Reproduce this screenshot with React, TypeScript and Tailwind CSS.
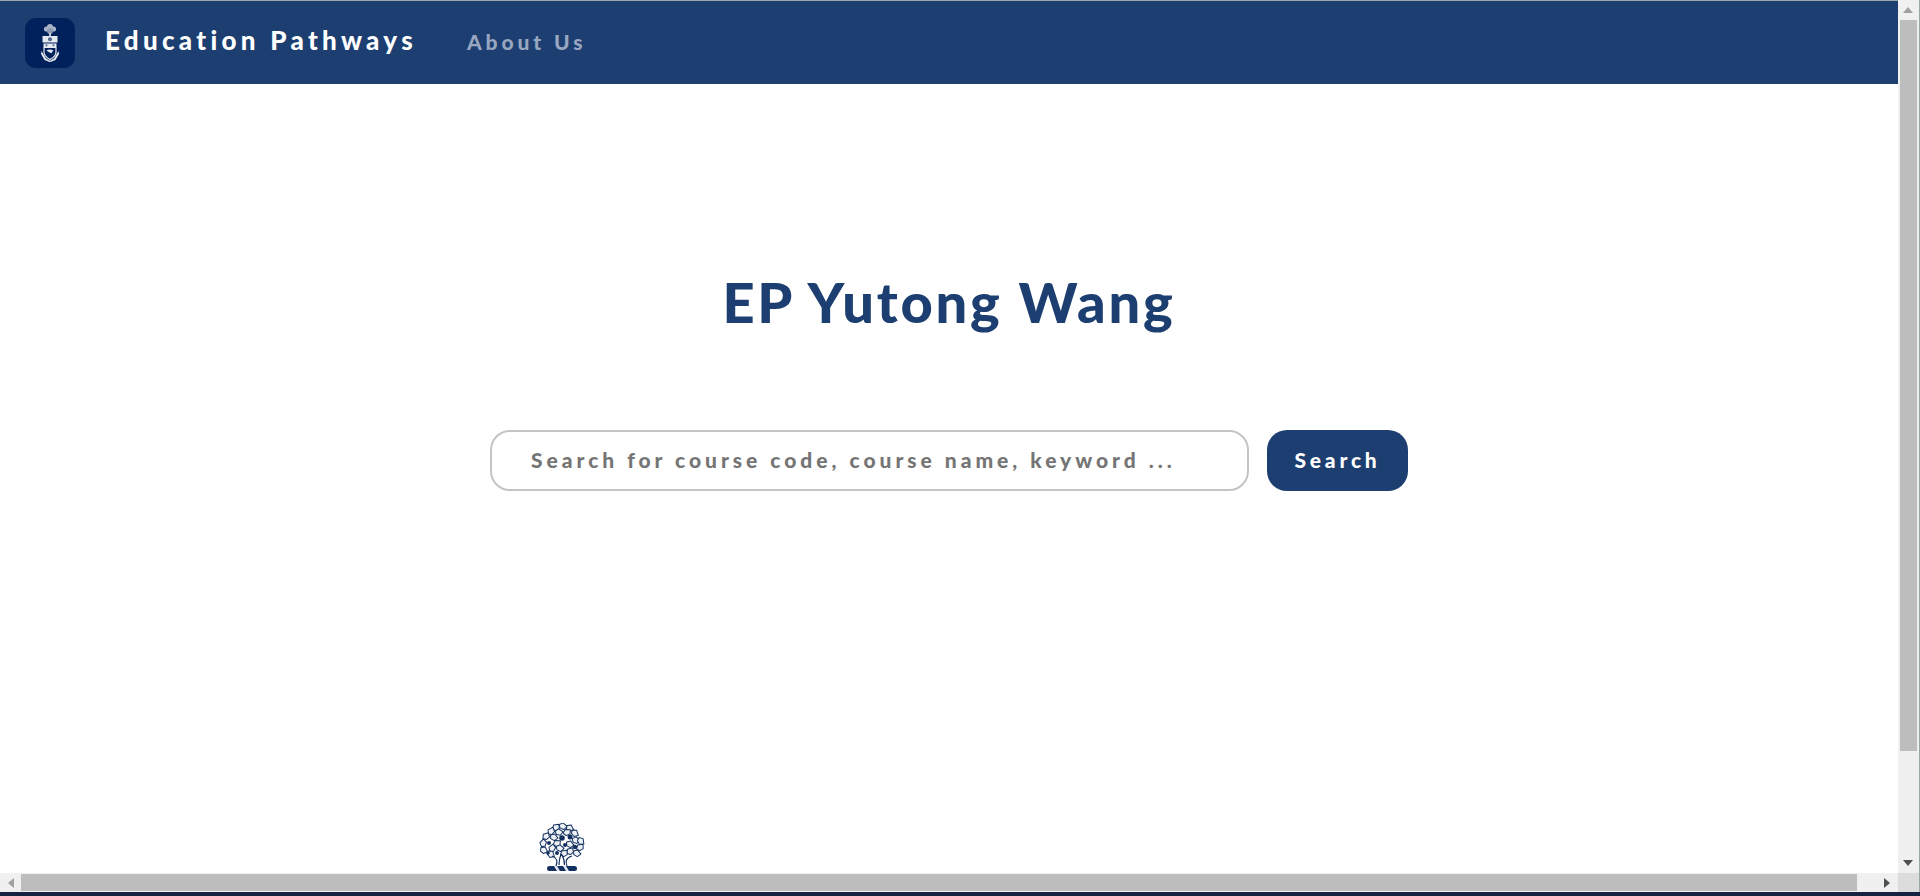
function Crest() {
  return (
    <svg viewBox="0 0 50 50" className="h-[50px] w-[50px]">
      <rect width="50" height="50" rx="11" fill="#00215c" />
      <g fill="#e4e8ef">
        <circle cx="25" cy="9" r="3" fill="#a9b4c8" />
        <circle cx="21.500" cy="11" r="2.600" fill="#a9b4c8" />
        <circle cx="28.500" cy="11" r="2.600" fill="#a9b4c8" />
        <circle cx="25" cy="13" r="3" fill="#8c9ab4" />
        <rect x="24.200" y="15" width="1.600" height="3.500" />
        <path d="M17.500 18h15v6.500h-15z" />
        <circle cx="25" cy="21.200" r="2" fill="#4f648c" />
        <path d="M18.500 25.500h13v3.500h-13z" />
        <circle cx="21.500" cy="27.200" r="1" fill="#4f648c" />
        <circle cx="28.500" cy="27.200" r="1" fill="#4f648c" />
        <path d="M19 29.500h12v4.500c0 3.500-3 6-6 7.500-3-1.500-6-4-6-7.500z" fill="none" stroke="#e4e8ef" strokeWidth="1.200" />
        <path d="M21.500 32.500c2-1.400 5-1.200 7 .3-1 .5-1.600 1-2 2.700-1.300-1-3-1.600-5-3z" />
        <path d="M16.500 33l-.5 3 3.500 6 5 2 1-1-4.500-2.500-3-5z" />
        <path d="M33.500 33l.5 3-3.500 6-5 2-1-1 4.500-2.500 3-5z" />
      </g>
    </svg>
  );
}

function Tree() {
  const leaves = [
    [24, 3, 20], [17, 4, -30], [31, 5, 40], [12, 8, -50], [20, 9, 10], [28, 9, -20], [36, 10, 50],
    [7, 13, -40], [15, 14, 30], [37, 17, 20], [42, 18, 60], [4, 20, -70], [18, 20, -20],
    [31, 21, 30], [41, 24, -30], [5, 27, 40], [13, 25, -60], [21, 25, 20], [31, 28, -40], [38, 30, 30],
    [12, 31, 50], [25, 30, -30],
  ];
  const patches = [
    [23, 15, 2.800], [31, 14, 2.500], [10, 20, 2], [26, 22, 2], [36, 24, 2.200], [9, 30, 1.800], [18, 30, 2],
  ];
  return (
    <svg viewBox="0 0 46 49" className="h-[49px] w-[46px]">
      {leaves.map(([x, y, a], i) => (
        <path
          key={i}
          d={`M${x - 4} ${y}L${x - 1} ${y - 3}L${x + 4} ${y - 1}L${x + 2} ${y + 3}L${x - 2} ${y + 3}z`}
          transform={`rotate(${a} ${x} ${y})`}
          fill="#eef1f6"
          stroke="#12305f"
          strokeWidth="1"
          strokeLinejoin="round"
        />
      ))}
      {patches.map(([x, y, r], i) => (
        <circle key={i} cx={x} cy={y} r={r} fill="#12305f" />
      ))}
      <path
        d="M17 43c2-5 1-8-4-10M28 43c-2-5-1-8 5-10M20 42c0-4 .5-7 2-11M25.500 42c0-4-.5-7-3-11"
        fill="none"
        stroke="#12305f"
        strokeWidth="1.200"
      />
      <rect x="8" y="43" width="30" height="5" rx="2.500" fill="#12305f" />
      <path d="M15 43l3 5h3l-3-5zM24 43l3 5h3l-3-5z" fill="#dfe5ee" />
    </svg>
  );
}

function Arrow({ points, dim }: { points: string; dim?: boolean }) {
  return (
    <svg viewBox="0 0 10 10" className="h-[10px] w-[10px]">
      <polygon points={points} fill={dim ? "#a0a0a0" : "#505050"} />
    </svg>
  );
}

export default function App() {
  return (
    <div
      className="flex h-screen w-full flex-col overflow-hidden bg-white"
      style={{ fontFamily: '"Lato", "Open Sans", sans-serif' }}
    >
      <div className="flex min-h-0 flex-1">
        <main className="flex min-w-0 flex-1 flex-col">
          <nav className="flex h-[84px] shrink-0 items-center border-t border-t-[#9aa7a8] bg-[#1c3e70] pl-[25px]">
            <Crest />
            <a className="relative -top-[2px] ml-[30px] text-[26px] font-black tracking-[4.300px] text-white">Education Pathways</a>
            <a className="relative -top-[1px] ml-[50px] text-[21px] font-black tracking-[3.900px] text-[#98a6c0]">About Us</a>
          </nav>

          <h1 className="mt-[184px] text-center text-[56px] leading-[68px] font-black tracking-[2.800px] text-[#1c3e70]">
            EP Yutong Wang
          </h1>

          <form className="mt-[94px] flex items-center justify-center gap-[18px]">
            <input
              className="h-[61px] w-[759px] rounded-[20px] border-2 border-[#c4c4c4] bg-white pb-[2px] pl-[39px] text-[21px] font-black tracking-[3.980px] outline-none placeholder:text-[#757575]"
              placeholder="Search for course code, course name, keyword ..."
            />
            <button
              type="button"
              className="h-[61px] w-[141px] rounded-[20px] bg-[#1c3e70] pb-[2px] text-[21px] font-black tracking-[3.800px] text-white"
            >
              Search
            </button>
          </form>

          <div className="mt-auto pb-[1px] pl-[539px]">
            <Tree />
          </div>
        </main>

        <div className="flex w-[22px] shrink-0 flex-col items-center border-r border-r-[#9aa7a8] bg-[#f0f0f0] pr-[1px]">
          <div className="flex h-[20px] items-center justify-center">
            <Arrow points="5,2 10,8 0,8" dim />
          </div>
          <div className="h-[731px] w-[17px] bg-[#bdbdbd]" />
          <div className="mt-auto flex h-[20px] items-center justify-center">
            <Arrow points="0,2 10,2 5,8" />
          </div>
        </div>
      </div>

      <div className="flex h-[19px] shrink-0 items-center bg-[#f0f0f0]">
        <div className="flex w-[21px] items-center justify-center">
          <Arrow points="8,0 8,10 2,5" dim />
        </div>
        <div className="h-[17px] w-[1836px] bg-[#bdbdbd]" />
        <div className="flex h-full flex-1 items-center justify-end pr-[6px]">
          <Arrow points="2,0 2,10 8,5" />
        </div>
        <div className="h-full w-[22px] border-r border-r-[#9aa7a8] bg-[#dcdcdc]" />
      </div>
      <div className="h-[4px] shrink-0 bg-[#14233f]" />
    </div>
  );
}
